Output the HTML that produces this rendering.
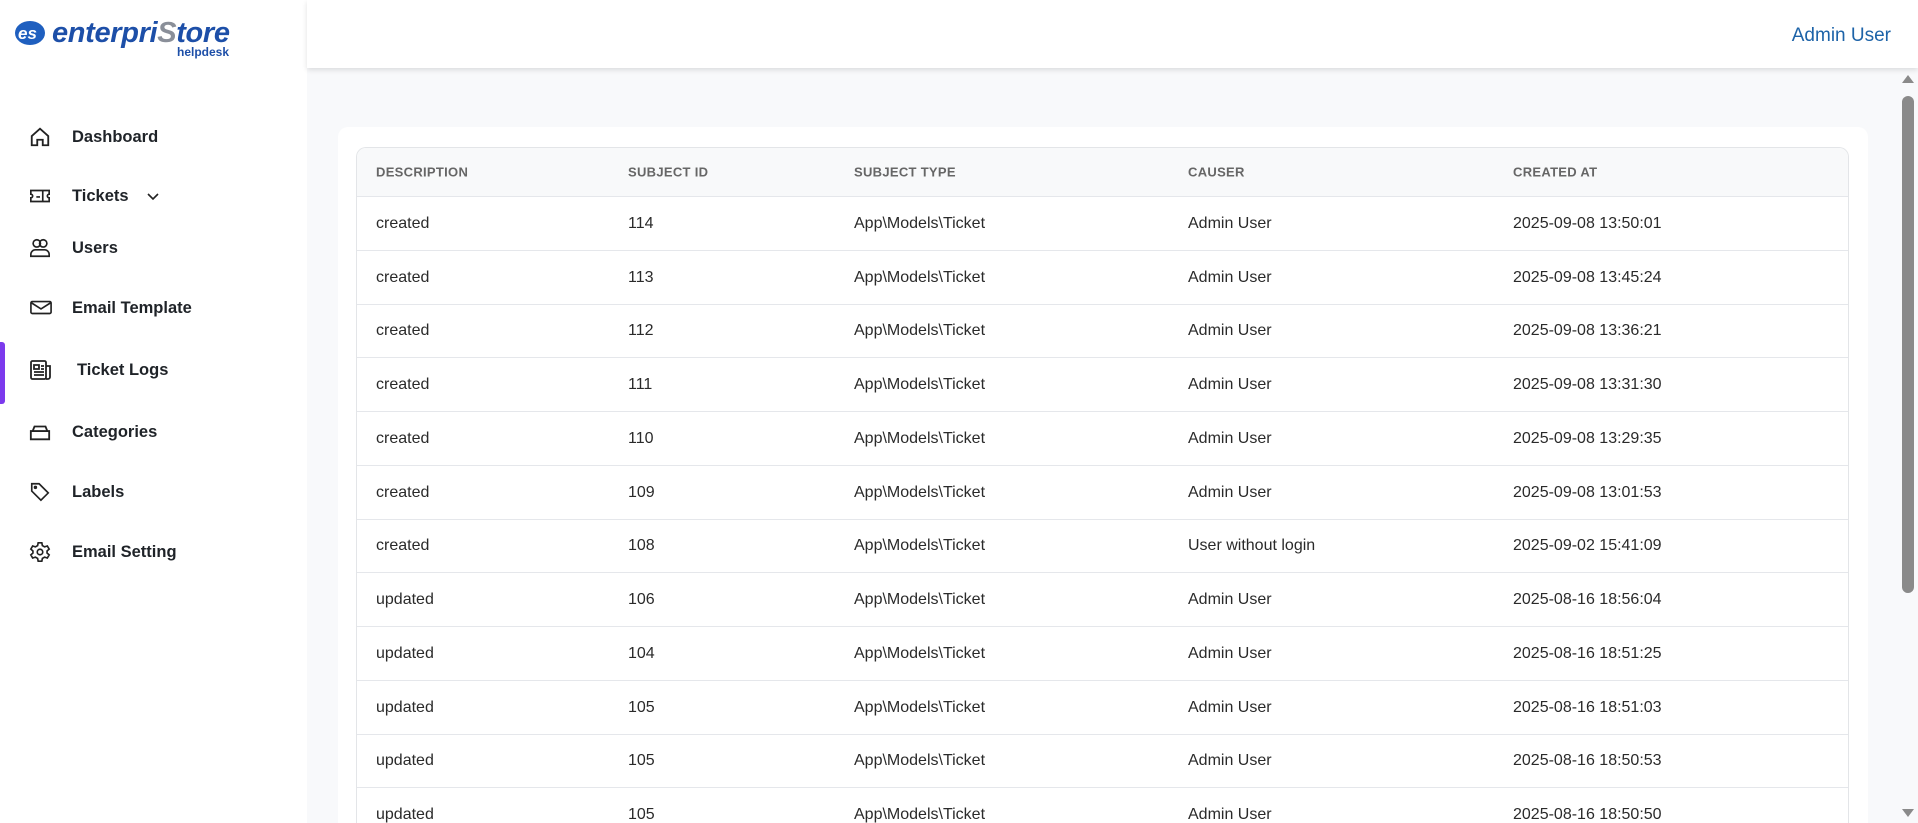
<!DOCTYPE html>
<html style="overflow:hidden;height:823px"><head><meta charset="utf-8"><style>
*{box-sizing:border-box;margin:0;padding:0}
html,body{width:1918px;height:823px;overflow:hidden}
body{background:#f8f9fb;font-family:"Liberation Sans",sans-serif;position:relative;color:#222}
.side{position:absolute;left:0;top:0;width:307px;height:823px;background:#fff}
.top{position:absolute;left:307px;top:0;width:1611px;height:68px;background:#fff;box-shadow:0 2px 5px rgba(0,0,0,.12)}
.admin{position:absolute;right:27px;top:25px;color:#1d63a8;font-size:19px}
.logo{position:absolute;left:14px;top:16px}
.nav{position:absolute;left:0;width:307px;height:40px;display:flex;align-items:center;font-size:16.5px;font-weight:bold;color:#1f2328}
.nav svg{position:absolute;left:29px}
.nav span{position:absolute;left:72px}
.bar{position:absolute;left:0;top:342px;width:5px;height:62px;background:#7c3aed;border-radius:0 3px 3px 0}
.card{position:absolute;left:338px;top:127px;width:1530px;height:696px;background:#fff;border-radius:10px 10px 0 0}
.tbl{position:absolute;left:356px;top:147px;width:1493px;height:676px;border:1px solid #e3e5e8;border-bottom:none;border-radius:10px 10px 0 0;overflow:hidden}
.row{position:absolute;left:0;width:100%;border-bottom:1px solid #e5e7eb;font-size:16px;color:#2a2a2a}
.row div{position:absolute;top:50%;transform:translateY(-50%);white-space:nowrap}
.hd{background:#f8f9fa;font-size:13px;font-weight:bold;color:#666;letter-spacing:.3px}
.c1{left:19px}.c2{left:271px}.c3{left:497px}.c4{left:831px}.c5{left:1156px}
.sb{position:absolute;left:1902px;top:96px;width:12px;height:497px;background:#8a8a8a;border-radius:6px}
</style></head><body>
<div class="side">
<svg class="logo" width="230" height="44" viewBox="0 0 230 44">
<ellipse cx="16" cy="17" rx="15" ry="12" fill="#1f5fbf"/>
<text x="4" y="23" font-family="Liberation Sans" font-weight="bold" font-style="italic" font-size="17" fill="#fff">es</text>
<text x="38" y="26" font-family="Liberation Sans" font-weight="bold" font-style="italic" font-size="29" fill="#1d4fa8" textLength="178">enterpri<tspan fill="#8a8f99">S</tspan>tore</text>
<text x="163" y="40" font-family="Liberation Sans" font-weight="bold" font-size="12" fill="#1d4fa8">helpdesk</text>
</svg>
<div class="bar"></div>
<div class="nav" style="top:117px"><svg width="22" height="22" viewBox="0 0 24 24" fill="none" stroke="#222" stroke-width="2"><path d="M3 11l9-8 9 8v10h-6v-6h-6v6H3z"/></svg><span>Dashboard</span></div>
<div class="nav" style="top:176px"><svg width="22" height="22" viewBox="0 0 24 24" fill="none" stroke="#222" stroke-width="1.8"><path d="M2 6h20v4a2 2 0 000 4v4H2v-4a2 2 0 000-4z M8 13h4 M15 7v10"/></svg><span>Tickets</span><svg style="left:146px" width="14" height="14" viewBox="0 0 14 14" fill="none" stroke="#222" stroke-width="1.6"><path d="M2 5l5 5 5-5"/></svg></div>
<div class="nav" style="top:228px"><svg width="22" height="22" viewBox="0 0 24 24" fill="none" stroke="#222" stroke-width="1.8"><circle cx="8.5" cy="7" r="4"/><circle cx="15.5" cy="7" r="4"/><path d="M2 21v-2a5 5 0 015-5h10a5 5 0 015 5v2z"/></svg><span>Users</span></div>
<div class="nav" style="top:288px"><svg width="24" height="22" viewBox="0 0 24 24" fill="none" stroke="#222" stroke-width="1.8"><rect x="1" y="5" width="22" height="13" rx="1.5"/><path d="M1 6l11 7 11-7"/></svg><span>Email Template</span></div>
<div class="nav" style="top:350px"><svg width="24" height="24" viewBox="0 0 24 24" fill="none" stroke="#222" stroke-width="1.8"><rect x="2" y="3" width="15" height="18" rx="1.5"/><path d="M17 8h4v11a2 2 0 01-2 2h-2 M5 7h5v4H5z M12 8h3 M12 11h3 M5 14h10 M5 17h10"/></svg><span style="left:77px">Ticket Logs</span></div>
<div class="nav" style="top:412px"><svg width="22" height="22" viewBox="0 0 24 24" fill="none" stroke="#222" stroke-width="2"><path d="M6 6h12l2 5H4z M2 11h20v9H2z"/></svg><span>Categories</span></div>
<div class="nav" style="top:472px"><svg width="22" height="22" viewBox="0 0 24 24" fill="none" stroke="#222" stroke-width="1.8"><path d="M3 3h8l10 10-8 8L3 11z"/><circle cx="7" cy="7" r="1"/></svg><span>Labels</span></div>
<div class="nav" style="top:532px"><svg width="22" height="22" viewBox="0 0 24 24" fill="none" stroke="#222" stroke-width="1.8"><circle cx="12" cy="12" r="3"/><path d="M10 2h4l.6 3 2.4 1.4 3-1 2 3.4-2.3 2.1v2.2l2.3 2.1-2 3.4-3-1-2.4 1.4-.6 3h-4l-.6-3L7 17.6l-3 1-2-3.4 2.3-2.1v-2.2L2 8.8l2-3.4 3 1L9.4 5z"/></svg><span>Email Setting</span></div>
</div>
<div class="top"><div class="admin">Admin User</div></div>
<div class="card"></div>
<div class="tbl">
<div class="row hd" style="top:0;height:49px"><div class="c1">DESCRIPTION</div><div class="c2">SUBJECT ID</div><div class="c3">SUBJECT TYPE</div><div class="c4">CAUSER</div><div class="c5">CREATED AT</div></div>
<div class="row" style="top:49px;height:54px"><div class="c1">created</div><div class="c2">114</div><div class="c3">App\Models\Ticket</div><div class="c4">Admin User</div><div class="c5">2025-09-08 13:50:01</div></div>
<div class="row" style="top:103px;height:54px"><div class="c1">created</div><div class="c2">113</div><div class="c3">App\Models\Ticket</div><div class="c4">Admin User</div><div class="c5">2025-09-08 13:45:24</div></div>
<div class="row" style="top:157px;height:53px"><div class="c1">created</div><div class="c2">112</div><div class="c3">App\Models\Ticket</div><div class="c4">Admin User</div><div class="c5">2025-09-08 13:36:21</div></div>
<div class="row" style="top:210px;height:54px"><div class="c1">created</div><div class="c2">111</div><div class="c3">App\Models\Ticket</div><div class="c4">Admin User</div><div class="c5">2025-09-08 13:31:30</div></div>
<div class="row" style="top:264px;height:54px"><div class="c1">created</div><div class="c2">110</div><div class="c3">App\Models\Ticket</div><div class="c4">Admin User</div><div class="c5">2025-09-08 13:29:35</div></div>
<div class="row" style="top:318px;height:54px"><div class="c1">created</div><div class="c2">109</div><div class="c3">App\Models\Ticket</div><div class="c4">Admin User</div><div class="c5">2025-09-08 13:01:53</div></div>
<div class="row" style="top:372px;height:53px"><div class="c1">created</div><div class="c2">108</div><div class="c3">App\Models\Ticket</div><div class="c4">User without login</div><div class="c5">2025-09-02 15:41:09</div></div>
<div class="row" style="top:425px;height:54px"><div class="c1">updated</div><div class="c2">106</div><div class="c3">App\Models\Ticket</div><div class="c4">Admin User</div><div class="c5">2025-08-16 18:56:04</div></div>
<div class="row" style="top:479px;height:54px"><div class="c1">updated</div><div class="c2">104</div><div class="c3">App\Models\Ticket</div><div class="c4">Admin User</div><div class="c5">2025-08-16 18:51:25</div></div>
<div class="row" style="top:533px;height:54px"><div class="c1">updated</div><div class="c2">105</div><div class="c3">App\Models\Ticket</div><div class="c4">Admin User</div><div class="c5">2025-08-16 18:51:03</div></div>
<div class="row" style="top:587px;height:53px"><div class="c1">updated</div><div class="c2">105</div><div class="c3">App\Models\Ticket</div><div class="c4">Admin User</div><div class="c5">2025-08-16 18:50:53</div></div>
<div class="row" style="top:640px;height:54px"><div class="c1">updated</div><div class="c2">105</div><div class="c3">App\Models\Ticket</div><div class="c4">Admin User</div><div class="c5">2025-08-16 18:50:50</div></div>
</div>
<svg style="position:absolute;left:1901px;top:74px" width="14" height="10"><path d="M7 1l6 8H1z" fill="#8a8a8a"/></svg>
<div class="sb"></div>
<svg style="position:absolute;left:1901px;top:808px" width="14" height="10"><path d="M7 9l6-8H1z" fill="#8a8a8a"/></svg>
</body></html>
